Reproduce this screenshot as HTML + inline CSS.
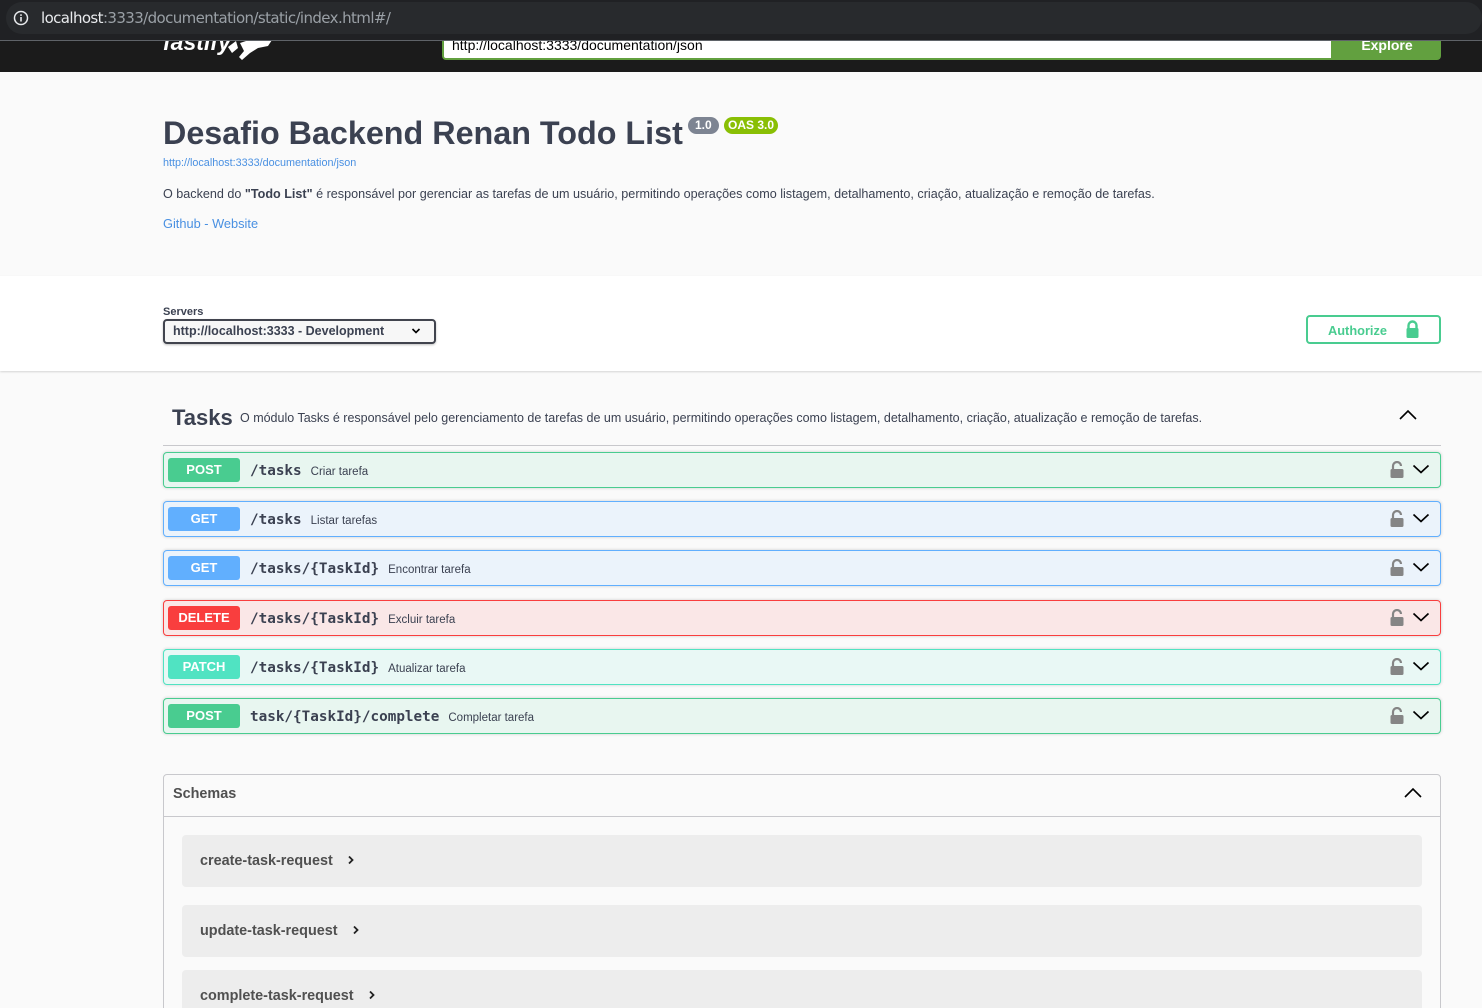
<!DOCTYPE html>
<html style="width:1482px;height:1008px;overflow:hidden"><head><meta charset="utf-8">
<style>
*{margin:0;padding:0;box-sizing:border-box}
body{width:1482px;height:1008px;overflow:hidden;background:#fafafa;font-family:"Liberation Sans",Arial,sans-serif;color:#3b4151;position:relative}
.abs{position:absolute}
.chrome{left:0;top:0;width:1482px;height:41px;background:#202124;border-bottom:1px solid #5f6368}
.addr{left:6px;top:2px;width:1476px;height:32px;background:#282a2d;border-radius:16px}
.topbar{left:0;top:41px;width:1482px;height:31px;background:#1b1b1b;overflow:hidden}
.op{position:absolute;left:163px;width:1278px;height:36px;border:1px solid;border-radius:4px;box-shadow:0 0 3px rgba(0,0,0,.19)}
.badge{position:absolute;left:4px;top:5px;width:72px;height:24px;border-radius:3px;color:#fff;font-weight:bold;font-size:13px;text-align:center;line-height:24px}
.path{position:absolute;left:86px;top:10px;font-family:"DejaVu Sans Mono","Liberation Mono",monospace;font-weight:bold;font-size:14.3px;color:#3b4151;white-space:nowrap}
.desc{font-family:"Liberation Sans",sans-serif;font-weight:normal;font-size:11.5px;margin-left:9px}
.lk{position:absolute;right:36px;top:8px}
.ch{position:absolute;right:10px;top:10px}
.sch{position:absolute;left:182px;width:1240px;background:#ededed;border-radius:4px;font-weight:bold;font-size:14.4px;color:#505050;white-space:nowrap}
.sch svg{margin-left:14px;vertical-align:0}
</style></head><body>
<div class="abs chrome"></div>
<div class="abs addr"></div>
<svg class="abs" style="left:13px;top:10px" width="16" height="16" viewBox="0 0 16 16"><circle cx="8" cy="8" r="6.5" fill="none" stroke="#e8eaed" stroke-width="1.5"/><rect x="7.2" y="7" width="1.6" height="4.5" fill="#e8eaed"/><rect x="7.2" y="4.3" width="1.6" height="1.6" fill="#e8eaed"/></svg>
<div class="abs" style="left:41px;top:9px;font-size:15px;color:#e8eaed;font-family:'DejaVu Sans',sans-serif;letter-spacing:-0.6px">localhost<span style="color:#9aa0a6">:3333/documentation/static/index.html#/</span></div>
<div class="abs topbar">
 <div class="abs" style="left:163px;top:-12px;color:#fff;font-weight:bold;font-style:italic;font-size:23px">fastify</div>
 <svg class="abs" style="left:226px;top:-2px" width="48" height="22" viewBox="0 0 48 22"><path d="M2 8 L10 2 L12 9 L6 14 Z M14 4 L26 0 L36 2 L46 1 L42 7 L32 9 L24 14 L16 21 L13 18 L18 12 Z" fill="#fff"/></svg>
 <div class="abs" style="left:442px;top:-10px;width:891px;height:29px;background:#fff;border:2px solid #62a03f;border-top:none;border-radius:0 0 0 4px"></div>
 <div class="abs" style="left:452px;top:-4px;font-size:14px;color:#000">http://localhost:3333/documentation/json</div>
 <div class="abs" style="left:1333px;top:-10px;width:108px;height:29px;background:#62a03f;border-radius:0 0 4px 0;color:#fff;font-weight:bold;font-size:14px;text-align:center;line-height:28px">Explore</div>
</div>

<div class="abs" style="left:163px;top:115px;font-size:32.3px;font-weight:bold;color:#3b4151;white-space:nowrap">Desafio Backend Renan Todo List</div>
<div class="abs" style="left:688px;top:117px;height:17px;padding:0 7px;background:#7d8492;border-radius:57px;color:#fff;font-weight:bold;font-size:12px;line-height:17px">1.0</div>
<div class="abs" style="left:724px;top:117px;height:17px;padding:0 4px;background:#89bf04;border-radius:57px;color:#fff;font-weight:bold;font-size:12px;line-height:17px">OAS 3.0</div>
<div class="abs" style="left:163px;top:157px;font-size:10.8px;color:#4990e2">http://localhost:3333/documentation/json</div>
<div class="abs" style="left:163px;top:187px;font-size:12.6px;white-space:nowrap">O backend do <b>"Todo List"</b> é responsável por gerenciar as tarefas de um usuário, permitindo operações como listagem, detalhamento, criação, atualização e remoção de tarefas.</div>
<div class="abs" style="left:163px;top:216px;font-size:12.8px;color:#4990e2">Github - Website</div>

<div class="abs" style="left:0;top:276px;width:1482px;height:95px;background:#fff;box-shadow:0 1px 2px rgba(0,0,0,.15)"></div>
<div class="abs" style="left:163px;top:306px;font-size:11px;font-weight:bold">Servers</div>
<div class="abs" style="left:163px;top:319px;width:273px;height:25px;border:2px solid #41444e;border-radius:4px;box-shadow:0 1px 2px rgba(0,0,0,.25);font-size:12.5px;font-weight:bold;padding:3px 8px;background:#f7f7f7;white-space:nowrap">http://localhost:3333 - Development</div>
<svg class="abs" style="left:411px;top:327px" width="10" height="8" viewBox="0 0 10 8"><path d="M1.5 2 L5 5.5 L8.5 2" fill="none" stroke="#000" stroke-width="1.6"/></svg>
<div class="abs" style="left:1306px;top:315px;width:135px;height:29px;border:2px solid #49cc90;border-radius:4px;color:#49cc90;font-weight:bold;font-size:12.8px;padding:6px 0 0 20px">Authorize</div>
<svg class="abs" style="left:1405px;top:320px" width="16" height="19" viewBox="0 0 16 19"><path d="M3.5 9 V5.5 A4 4 0 0 1 11.5 5.5 V9" fill="none" stroke="#49cc90" stroke-width="2.4"/><rect x="1.5" y="8" width="12" height="10" rx="1.5" fill="#49cc90"/></svg>

<div class="abs" style="left:172px;top:405px;font-size:22px;font-weight:bold">Tasks</div>
<div class="abs" style="left:240px;top:411px;font-size:12.5px;white-space:nowrap">O módulo Tasks é responsável pelo gerenciamento de tarefas de um usuário, permitindo operações como listagem, detalhamento, criação, atualização e remoção de tarefas.</div>
<svg class="abs" style="left:1398px;top:408px" width="20" height="14" viewBox="0 0 20 14"><path d="M2 11 L10 3 L18 11" fill="none" stroke="#000" stroke-width="1.6"/></svg>
<div class="abs" style="left:163px;top:445px;width:1278px;height:1px;background:#c8c8cc"></div>

<div class="op" style="top:452px;background:#e8f6f0;border-color:#49cc90"><div class="badge" style="background:#49cc90">POST</div><div class="path">/tasks<span class="desc">Criar tarefa</span></div><svg class="lk" width="14" height="18" viewBox="0 0 14 18"><path d="M3 9 V5 A4 4 0 0 1 11 5" fill="none" stroke="#858585" stroke-width="2.2"/><rect x="0.5" y="8" width="13" height="9" rx="1.5" fill="#858585"/></svg><svg class="ch" width="18" height="12" viewBox="0 0 18 12"><path d="M1.5 2.5 L9 9.5 L16.5 2.5" fill="none" stroke="#000" stroke-width="1.7"/></svg></div>
<div class="op" style="top:501px;background:#ebf3fb;border-color:#61affe"><div class="badge" style="background:#61affe">GET</div><div class="path">/tasks<span class="desc">Listar tarefas</span></div><svg class="lk" width="14" height="18" viewBox="0 0 14 18"><path d="M3 9 V5 A4 4 0 0 1 11 5" fill="none" stroke="#858585" stroke-width="2.2"/><rect x="0.5" y="8" width="13" height="9" rx="1.5" fill="#858585"/></svg><svg class="ch" width="18" height="12" viewBox="0 0 18 12"><path d="M1.5 2.5 L9 9.5 L16.5 2.5" fill="none" stroke="#000" stroke-width="1.7"/></svg></div>
<div class="op" style="top:550px;background:#ebf3fb;border-color:#61affe"><div class="badge" style="background:#61affe">GET</div><div class="path">/tasks/{TaskId}<span class="desc">Encontrar tarefa</span></div><svg class="lk" width="14" height="18" viewBox="0 0 14 18"><path d="M3 9 V5 A4 4 0 0 1 11 5" fill="none" stroke="#858585" stroke-width="2.2"/><rect x="0.5" y="8" width="13" height="9" rx="1.5" fill="#858585"/></svg><svg class="ch" width="18" height="12" viewBox="0 0 18 12"><path d="M1.5 2.5 L9 9.5 L16.5 2.5" fill="none" stroke="#000" stroke-width="1.7"/></svg></div>
<div class="op" style="top:600px;background:#fae7e7;border-color:#f93e3e"><div class="badge" style="background:#f93e3e">DELETE</div><div class="path">/tasks/{TaskId}<span class="desc">Excluir tarefa</span></div><svg class="lk" width="14" height="18" viewBox="0 0 14 18"><path d="M3 9 V5 A4 4 0 0 1 11 5" fill="none" stroke="#858585" stroke-width="2.2"/><rect x="0.5" y="8" width="13" height="9" rx="1.5" fill="#858585"/></svg><svg class="ch" width="18" height="12" viewBox="0 0 18 12"><path d="M1.5 2.5 L9 9.5 L16.5 2.5" fill="none" stroke="#000" stroke-width="1.7"/></svg></div>
<div class="op" style="top:649px;background:#e9f8f5;border-color:#50e3c2"><div class="badge" style="background:#50e3c2">PATCH</div><div class="path">/tasks/{TaskId}<span class="desc">Atualizar tarefa</span></div><svg class="lk" width="14" height="18" viewBox="0 0 14 18"><path d="M3 9 V5 A4 4 0 0 1 11 5" fill="none" stroke="#858585" stroke-width="2.2"/><rect x="0.5" y="8" width="13" height="9" rx="1.5" fill="#858585"/></svg><svg class="ch" width="18" height="12" viewBox="0 0 18 12"><path d="M1.5 2.5 L9 9.5 L16.5 2.5" fill="none" stroke="#000" stroke-width="1.7"/></svg></div>
<div class="op" style="top:698px;background:#e8f6f0;border-color:#49cc90"><div class="badge" style="background:#49cc90">POST</div><div class="path">task/{TaskId}/complete<span class="desc">Completar tarefa</span></div><svg class="lk" width="14" height="18" viewBox="0 0 14 18"><path d="M3 9 V5 A4 4 0 0 1 11 5" fill="none" stroke="#858585" stroke-width="2.2"/><rect x="0.5" y="8" width="13" height="9" rx="1.5" fill="#858585"/></svg><svg class="ch" width="18" height="12" viewBox="0 0 18 12"><path d="M1.5 2.5 L9 9.5 L16.5 2.5" fill="none" stroke="#000" stroke-width="1.7"/></svg></div>

<div class="abs" style="left:163px;top:774px;width:1278px;height:250px;border:1px solid #c8c8cc;border-radius:4px"></div>
<div class="abs" style="left:163px;top:816px;width:1278px;height:1px;background:#c8c8cc"></div>
<div class="abs" style="left:173px;top:786px;font-size:14.4px;font-weight:bold;color:#505050">Schemas</div>
<svg class="abs" style="left:1403px;top:786px" width="20" height="14" viewBox="0 0 20 14"><path d="M2 11 L10 3 L18 11" fill="none" stroke="#000" stroke-width="1.6"/></svg>
<div class="sch" style="top:835px;height:52px;padding:18px 0 0 18px">create-task-request<svg width="8" height="10" viewBox="0 0 8 10"><path d="M2 1.5 L5.5 5 L2 8.5" fill="none" stroke="#222" stroke-width="1.8"/></svg></div>
<div class="sch" style="top:905px;height:52px;padding:18px 0 0 18px">update-task-request<svg width="8" height="10" viewBox="0 0 8 10"><path d="M2 1.5 L5.5 5 L2 8.5" fill="none" stroke="#222" stroke-width="1.8"/></svg></div>
<div class="sch" style="top:970px;height:50px;padding:18px 0 0 18px">complete-task-request<svg width="8" height="10" viewBox="0 0 8 10"><path d="M2 1.5 L5.5 5 L2 8.5" fill="none" stroke="#222" stroke-width="1.8"/></svg></div>
</body></html>
